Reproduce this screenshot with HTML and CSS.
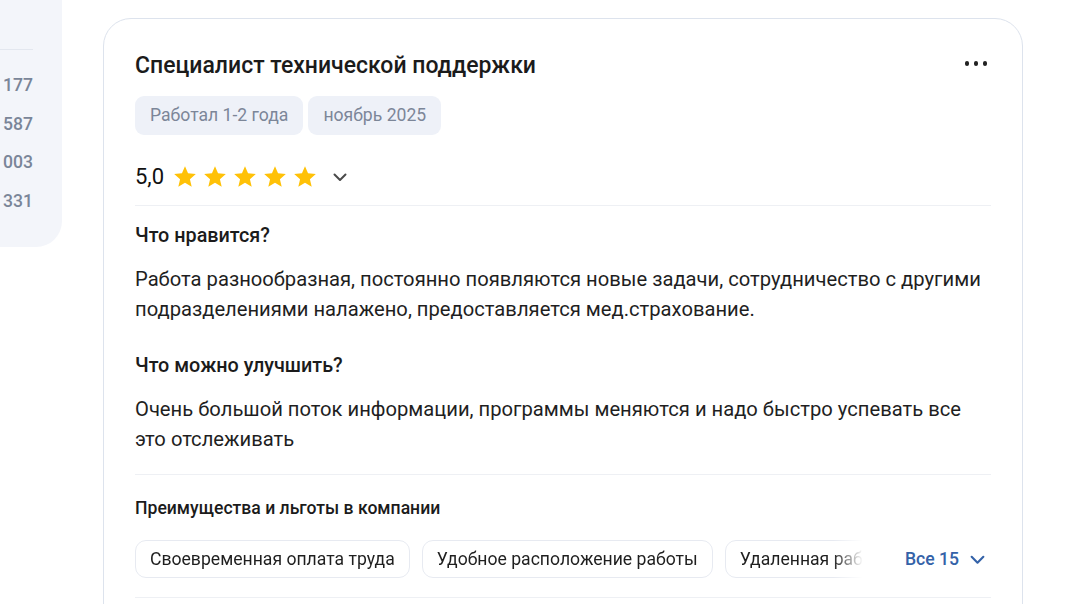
FILE: index.html
```html
<!DOCTYPE html>
<html lang="ru">
<head>
<meta charset="utf-8">
<link rel="stylesheet" href="styles.css">
</head>
<body>
<div class="page">
  <aside class="side">
    <div class="side-line"></div>
    <ul class="side-list">
      <li>177</li>
      <li>587</li>
      <li>003</li>
      <li>331</li>
    </ul>
  </aside>
  <article class="card">
    <div class="head">
      <h2 class="title">Специалист технической поддержки</h2>
      <button class="more" aria-label="Ещё"><span></span><span></span><span></span></button>
    </div>
    <div class="tags">
      <span class="tag">Работал 1-2 года</span>
      <span class="tag">ноябрь 2025</span>
    </div>
    <div class="rating">
      <span class="score">5,0</span>
      <span class="stars">
        <svg viewBox="0 0 24 24"><path d="M12 17.27L18.18 21l-1.64-7.03L22 9.24l-7.19-.61L12 2 9.19 8.63 2 9.24l5.46 4.73L5.82 21z"/></svg>
        <svg viewBox="0 0 24 24"><path d="M12 17.27L18.18 21l-1.64-7.03L22 9.24l-7.19-.61L12 2 9.19 8.63 2 9.24l5.46 4.73L5.82 21z"/></svg>
        <svg viewBox="0 0 24 24"><path d="M12 17.27L18.18 21l-1.64-7.03L22 9.24l-7.19-.61L12 2 9.19 8.63 2 9.24l5.46 4.73L5.82 21z"/></svg>
        <svg viewBox="0 0 24 24"><path d="M12 17.27L18.18 21l-1.64-7.03L22 9.24l-7.19-.61L12 2 9.19 8.63 2 9.24l5.46 4.73L5.82 21z"/></svg>
        <svg viewBox="0 0 24 24"><path d="M12 17.27L18.18 21l-1.64-7.03L22 9.24l-7.19-.61L12 2 9.19 8.63 2 9.24l5.46 4.73L5.82 21z"/></svg>
      </span>
      <svg class="chev" viewBox="0 0 16 16"><path d="M2.5 5.5L8 11l5.5-5.5" fill="none" stroke="currentColor" stroke-width="2" stroke-linecap="round" stroke-linejoin="round"/></svg>
    </div>
    <div class="divider"></div>
    <section class="block">
      <h3 class="q">Что нравится?</h3>
      <p class="a">Работа разнообразная, постоянно появляются новые задачи, сотрудничество с другими подразделениями налажено, предоставляется мед.страхование.</p>
    </section>
    <section class="block second">
      <h3 class="q">Что можно улучшить?</h3>
      <p class="a">Очень большой поток информации, программы меняются и надо быстро успевать все это отслеживать</p>
    </section>
    <div class="divider low"></div>
    <h4 class="perks-title">Преимущества и льготы в компании</h4>
    <div class="perks">
      <div class="chips">
        <span class="chip">Своевременная оплата труда</span>
        <span class="chip">Удобное расположение работы</span>
        <span class="chip">Удаленная работа</span>
      </div>
      <button class="all">Все 15
        <svg viewBox="0 0 16 16"><path d="M2.5 5.5L8 11l5.5-5.5" fill="none" stroke="currentColor" stroke-width="2" stroke-linecap="round" stroke-linejoin="round"/></svg>
      </button>
    </div>
    <div class="divider bottom"></div>
  </article>
</div>
</body>
</html>
```
FILE: styles.css
```css
* { box-sizing: border-box; }
html, body { margin: 0; padding: 0; background: #fff; }
body {
  font-family: Roboto, "Noto Sans", sans-serif;
  color: #1f1f1f;
  width: 1090px;
  height: 604px;
  overflow: hidden;
}
.page {
  display: flex;
  align-items: flex-start;
}
.side {
  width: 62px;
  height: 247px;
  flex: none;
  background: #f3f5fa;
  border-bottom-right-radius: 26px;
  padding: 49px 29px 0 0;
}
.side-line {
  height: 1px;
  background: #e3e7ef;
}
.side-list {
  list-style: none;
  margin: 0;
  padding: 25px 0 0 0;
  text-align: right;
}
.side-list li {
  font-size: 17.6px;
  font-weight: 500;
  line-height: 20px;
  height: 38.5px;
  color: #7a8598;
}
.card {
  margin: 18px 0 0 41px;
  width: 920px;
  height: 640px;
  border: 1px solid #dde3ed;
  border-radius: 28px;
  padding: 33px 31px 0 31px;
}
.head {
  display: flex;
  justify-content: space-between;
  align-items: flex-start;
}
.title {
  margin: 0;
  font-size: 23px;
  font-weight: 500;
  line-height: 28px;
  color: #1b1b1b;
}
.more {
  border: 0;
  background: none;
  padding: 0;
  margin: 9px 4px 0 0;
  display: flex;
  gap: 4.5px;
}
.more span {
  width: 4.5px;
  height: 4.5px;
  border-radius: 50%;
  background: #222;
}
.tags {
  display: flex;
  gap: 5px;
  margin-top: 16px;
}
.tag {
  background: #eef1f8;
  color: #7c8698;
  font-size: 17.6px;
  line-height: 39px;
  height: 39px;
  padding: 0 15px;
  border-radius: 9px;
}
.rating {
  display: flex;
  align-items: center;
  height: 32px;
  margin-top: 26px;
}
.score {
  font-size: 22px;
  line-height: 32px;
  color: #111;
  margin-right: 8px;
}
.stars {
  display: flex;
  gap: 4px;
}
.stars svg {
  width: 26px;
  height: 26px;
  fill: #ffc107;
}
.chev {
  width: 16px;
  height: 16px;
  color: #4a4a4a;
  margin-left: 14px;
}
.divider {
  height: 1px;
  background: #eef0f4;
  margin-top: 12px;
}
.block { margin-top: 18px; }
.block.second { margin-top: 30px; }
.q {
  margin: 0;
  font-size: 19.8px;
  font-weight: 500;
  line-height: 24px;
  color: #1b1b1b;
}
.a {
  margin: 16px 0 0 0;
  font-size: 20.2px;
  line-height: 30px;
  color: #1f1f1f;
}
.divider.low { margin-top: 20px; }
.perks-title {
  margin: 22px 0 0 0;
  font-size: 17.6px;
  font-weight: 500;
  line-height: 22px;
  color: #1b1b1b;
}
.perks {
  display: flex;
  align-items: center;
  margin-top: 21px;
}
.chips {
  flex: 0 0 728px;
  display: flex;
  gap: 12px;
  overflow: hidden;
  -webkit-mask-image: linear-gradient(to right, #000 calc(100% - 30px), transparent);
  mask-image: linear-gradient(to right, #000 calc(100% - 30px), transparent);
}
.chip {
  flex: none;
  height: 38px;
  line-height: 36px;
  padding: 0 14px;
  border: 1px solid #e7eaf1;
  border-radius: 11px;
  font-size: 17.6px;
  color: #1f1f1f;
  white-space: nowrap;
}
.all {
  margin-left: 42px;
  border: 0;
  background: none;
  padding: 0;
  font-family: inherit;
  font-size: 17.6px;
  font-weight: 500;
  color: #3462a8;
  display: flex;
  align-items: center;
  gap: 10px;
}
.all svg {
  width: 17px;
  height: 17px;
}
.divider.bottom { margin-top: 19px; }
```
